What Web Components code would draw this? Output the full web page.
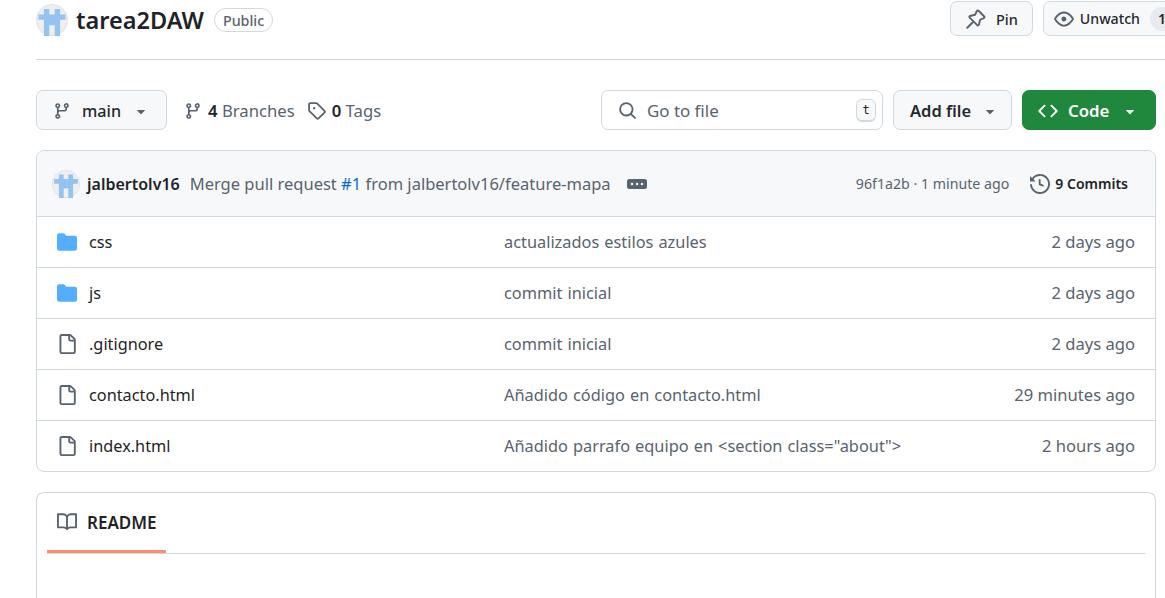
<!DOCTYPE html>
<html lang="en">
<head>
<meta charset="utf-8">
<title>tarea2DAW</title>
<style>
    html, body { margin: 0; height: 598px; overflow: hidden; background: #fff; }
    body { font-family: "Noto Sans", "Open Sans", Arial, sans-serif; color: #1f2328; }
</style>
</head>
<body>
<repo-page>
    <repo-header></repo-header>
    <repo-toolbar></repo-toolbar>
    <file-box>
        <commit-bar slot="head"></commit-bar>
        <file-row kind="dir" name="css" message="actualizados estilos azules" age="2 days ago"></file-row>
        <file-row kind="dir" name="js" message="commit inicial" age="2 days ago"></file-row>
        <file-row name=".gitignore" message="commit inicial" age="2 days ago"></file-row>
        <file-row name="contacto.html" message="Añadido código en contacto.html" age="29 minutes ago"></file-row>
        <file-row name="index.html" message="Añadido parrafo equipo en &lt;section class=&quot;about&quot;&gt;" age="2 hours ago"></file-row>
    </file-box>
    <readme-box></readme-box>
</repo-page>

<script>
(function () {
    const iconPaths = {
        branch: 'M9.5 3.25a2.25 2.25 0 1 1 3 2.122V6A2.5 2.5 0 0 1 10 8.5H6a1 1 0 0 0-1 1v1.128a2.251 2.251 0 1 1-1.5 0V5.372a2.25 2.25 0 1 1 1.5 0v1.836A2.493 2.493 0 0 1 6 7h4a1 1 0 0 0 1-1v-.628A2.25 2.25 0 0 1 9.5 3.25Zm-6 0a.75.75 0 1 0 1.5 0 .75.75 0 0 0-1.5 0Zm8.25-.75a.75.75 0 1 0 0 1.5.75.75 0 0 0 0-1.5ZM4.25 12a.75.75 0 1 0 0 1.5.75.75 0 0 0 0-1.5Z',
        tag: 'M1 7.775V2.75C1 1.784 1.784 1 2.75 1h5.025c.464 0 .91.184 1.238.513l6.25 6.25a1.75 1.75 0 0 1 0 2.474l-5.026 5.026a1.75 1.75 0 0 1-2.474 0l-6.25-6.25A1.752 1.752 0 0 1 1 7.775Zm1.5 0c0 .066.026.13.073.177l6.25 6.25a.25.25 0 0 0 .354 0l5.025-5.025a.25.25 0 0 0 0-.354l-6.25-6.25a.25.25 0 0 0-.177-.073H2.75a.25.25 0 0 0-.25.25ZM6 5a1 1 0 1 1 0 2 1 1 0 0 1 0-2Z',
        search: 'M10.68 11.74a6 6 0 0 1-7.922-8.982 6 6 0 0 1 8.982 7.922l3.04 3.04a.749.749 0 0 1-.326 1.275.749.749 0 0 1-.734-.215ZM11.5 7a4.499 4.499 0 1 0-8.997 0A4.499 4.499 0 0 0 11.5 7Z',
        code: 'm11.28 3.22 4.25 4.25a.75.75 0 0 1 0 1.06l-4.25 4.25a.749.749 0 0 1-1.275-.326.749.749 0 0 1 .215-.734L13.94 8l-3.72-3.72a.749.749 0 0 1 .326-1.275.749.749 0 0 1 .734.215Zm-6.56 0a.751.751 0 0 1 1.042.018.751.751 0 0 1 .018 1.042L2.06 8l3.72 3.72a.749.749 0 0 1-.326 1.275.749.749 0 0 1-.734-.215L.47 8.53a.75.75 0 0 1 0-1.06Z',
        eye: 'M8 2c1.981 0 3.671.992 4.933 2.078 1.27 1.091 2.187 2.345 2.637 3.023a1.62 1.62 0 0 1 0 1.798c-.45.678-1.367 1.932-2.637 3.023C11.67 13.008 9.981 14 8 14c-1.981 0-3.671-.992-4.933-2.078C1.797 10.83.88 9.576.43 8.898a1.62 1.62 0 0 1 0-1.798c.45-.677 1.367-1.931 2.637-3.022C4.33 2.992 6.019 2 8 2ZM1.679 7.932a.12.12 0 0 0 0 .136c.411.622 1.241 1.75 2.366 2.717C5.176 11.758 6.527 12.5 8 12.5c1.473 0 2.825-.742 3.955-1.715 1.124-.967 1.954-2.096 2.366-2.717a.12.12 0 0 0 0-.136c-.412-.621-1.242-1.75-2.366-2.717C10.824 4.242 9.473 3.5 8 3.5c-1.473 0-2.825.742-3.955 1.715-1.124.967-1.954 2.096-2.366 2.717ZM8 10a2 2 0 1 1-.001-3.999A2 2 0 0 1 8 10Z',
        history: 'm.427 1.927 1.215 1.215a8.002 8.002 0 1 1-1.6 5.685.75.75 0 1 1 1.493-.154 6.5 6.5 0 1 0 1.18-4.458l1.358 1.358A.25.25 0 0 1 3.896 6H.25A.25.25 0 0 1 0 5.75V2.104a.25.25 0 0 1 .427-.177ZM7.75 4a.75.75 0 0 1 .75.75v2.992l2.028.812a.75.75 0 0 1-.557 1.392l-2.5-1A.751.751 0 0 1 7 8.25v-3.5A.75.75 0 0 1 7.75 4Z',
        file: 'M2 1.75C2 .784 2.784 0 3.75 0h6.586c.464 0 .909.184 1.237.513l2.914 2.914c.329.328.513.773.513 1.237v9.586A1.75 1.75 0 0 1 13.25 16h-9.5A1.75 1.75 0 0 1 2 14.25Zm1.75-.25a.25.25 0 0 0-.25.25v12.5c0 .138.112.25.25.25h9.5a.25.25 0 0 0 .25-.25V6h-2.75A1.75 1.75 0 0 1 9 4.25V1.5Zm6.75.062V4.25c0 .138.112.25.25.25h2.688l-.011-.013-2.914-2.914-.013-.011Z',
        dir: 'M1.75 1A1.75 1.75 0 0 0 0 2.75v10.5C0 14.216.784 15 1.75 15h12.5A1.75 1.75 0 0 0 16 13.25v-8.5A1.75 1.75 0 0 0 14.25 3H7.5a.25.25 0 0 1-.2-.1l-.9-1.2C6.07 1.26 5.55 1 5 1H1.75Z',
        book: 'M0 1.75A.75.75 0 0 1 .75 1h4.253c1.227 0 2.317.59 3 1.501A3.743 3.743 0 0 1 11.006 1h4.245a.75.75 0 0 1 .75.75v10.5a.75.75 0 0 1-.75.75h-4.507a2.25 2.25 0 0 0-1.591.659l-.622.621a.75.75 0 0 1-1.06 0l-.622-.621A2.25 2.25 0 0 0 5.258 13H.75a.75.75 0 0 1-.75-.75Zm7.251 10.324.004-5.073-.002-2.253A2.25 2.25 0 0 0 5.003 2.5H1.5v9h3.757a3.75 3.75 0 0 1 1.994.574ZM8.755 4.75l-.004 7.322a3.752 3.752 0 0 1 1.992-.572H14.5v-9h-3.495a2.25 2.25 0 0 0-2.25 2.25Z',
        caret: 'm4.427 7.427 3.396 3.396a.25.25 0 0 0 .354 0l3.396-3.396A.25.25 0 0 0 11.396 7H4.604a.25.25 0 0 0-.177.427Z',
        ellipsis: 'M0 5.75C0 4.784.784 4 1.75 4h12.5c.966 0 1.75.784 1.75 1.75v4.5A1.75 1.75 0 0 1 14.25 12H1.75A1.75 1.75 0 0 1 0 10.25ZM12 7a1 1 0 1 0 0 2 1 1 0 0 0 0-2ZM7 8a1 1 0 1 0 2 0 1 1 0 0 0-2 0ZM4 7a1 1 0 1 0 0 2 1 1 0 0 0 0-2Z'
    };

    class OctIcon extends HTMLElement {
        connectedCallback() {
            const size = this.getAttribute('size') || '18';
            const name = this.getAttribute('name');
            const root = this.shadowRoot || this.attachShadow({ mode: 'open' });
            // pin is a stroked shape, the others are octicon fills
            const inner = name === 'pin'
                ? '<path fill="none" stroke="currentColor" stroke-width="1.5" stroke-linejoin="round" stroke-linecap="round" d="M10 1.4l4.6 4.6a.8.8 0 0 1-.3 1.3l-3 1.3-1 4a.8.8 0 0 1-1.3.35L2.9 6.9a.8.8 0 0 1 .35-1.3l4-1 1.4-2.9A.8.8 0 0 1 10 1.4ZM5.8 10.2l-4.8 4.8"/>'
                : `<path fill="currentColor" d="${iconPaths[name]}"/>`;
            root.innerHTML = `
                <style>
                    :host { display: inline-flex; flex: none; }
                    svg { display: block; }
                </style>
                <svg width="${size}" height="${size}" viewBox="0 0 16 16">${inner}</svg>`;
        }
    }
    customElements.define('oct-icon', OctIcon);

    class IdentIcon extends HTMLElement {
        connectedCallback() {
            const size = this.getAttribute('size') || '32';
            const root = this.shadowRoot || this.attachShadow({ mode: 'open' });
            root.innerHTML = `
                <style>
                    :host { display: inline-flex; flex: none; }
                    svg { display: block; }
                </style>
                <svg width="${size}" height="${size}" viewBox="0 0 32 32">
                    <circle cx="16" cy="16" r="15.5" fill="#efefef" stroke="#dcdfe3"/>
                    <path fill="#93c3ee" transform="translate(2.5 5)" d="M5.4 0h5.4v5.4h5.4V0h5.4v5.4H27v5.4h-5.4v16.2h-5.4V16.2h-5.4V27H5.4V10.8H0V5.4h5.4Z"/>
                </svg>`;
        }
    }
    customElements.define('ident-icon', IdentIcon);

    class RepoButton extends HTMLElement {
        connectedCallback() {
            const root = this.shadowRoot || this.attachShadow({ mode: 'open' });
            root.innerHTML = `
                <style>
                    :host {
                        display: inline-flex;
                        align-items: center;
                        box-sizing: border-box;
                        height: var(--btn-height, 40px);
                        padding: var(--btn-padding, 1px 16px 0);
                        gap: var(--btn-gap, 10px);
                        border: 1px solid #d1d9e0;
                        border-radius: 7px;
                        background: #f6f8fa;
                        color: #25292e;
                        font-size: var(--btn-font, 16.5px);
                        font-weight: var(--btn-weight, 600);
                        white-space: nowrap;
                    }
                    :host([primary]) {
                        background: #1f883d;
                        border-color: #1f883d;
                        color: #fff;
                        font-weight: 600;
                    }
                </style>
                <slot></slot>`;
        }
    }
    customElements.define('repo-button', RepoButton);

    class RepoHeader extends HTMLElement {
        connectedCallback() {
            const root = this.shadowRoot || this.attachShadow({ mode: 'open' });
            root.innerHTML = `
                <style>
                    :host {
                        display: flex;
                        justify-content: space-between;
                        box-sizing: border-box;
                        height: 60px;
                        margin-right: -18px;
                        border-bottom: 1px solid #d1d9e0;
                        padding-top: 1px;
                    }
                    .left { display: flex; align-items: center; height: 40px; margin-top: -1px; }
                    .name { margin-left: 8px; font-size: 23.5px; font-weight: 600; color: #1f2328; line-height: 40px; }
                    .label {
                        margin-left: 10px;
                        height: 24px;
                        line-height: 23px;
                        box-sizing: border-box;
                        padding: 0 8px;
                        border: 1px solid #d1d9e0;
                        border-radius: 12px;
                        font-size: 14.3px;
                        font-weight: 500;
                        color: #59636e;
                    }
                    .right { display: flex; gap: 10px; align-items: flex-start; --btn-height: 35px; --btn-font: 14.2px; --btn-weight: 500; }
                    .pin { --btn-padding: 0 14px 0 15px; --btn-gap: 10px; --btn-font: 14.5px; }
                    .watch { --btn-padding: 0 8px 0 10px; --btn-gap: 6px; }
                    .count {
                        display: inline-block;
                        width: 24px;
                        height: 24px;
                        line-height: 24px;
                        margin-left: 4px;
                        border-radius: 12px;
                        background: #e7ebef;
                        text-align: center;
                        font-size: 14px;
                        font-weight: 600;
                    }
                    oct-icon { color: #59636e; }
                </style>
                <div class="left">
                    <ident-icon size="32"></ident-icon>
                    <span class="name">tarea2DAW</span>
                    <span class="label">Public</span>
                </div>
                <div class="right">
                    <repo-button class="pin"><oct-icon name="pin" size="20"></oct-icon>Pin</repo-button>
                    <repo-button class="watch"><oct-icon name="eye" size="20"></oct-icon>Unwatch<span class="count">1</span></repo-button>
                </div>`;
        }
    }
    customElements.define('repo-header', RepoHeader);

    class RepoToolbar extends HTMLElement {
        connectedCallback() {
            const root = this.shadowRoot || this.attachShadow({ mode: 'open' });
            root.innerHTML = `
                <style>
                    :host {
                        display: flex;
                        align-items: center;
                        margin-top: 30px;
                        width: 1120px;
                        height: 40px;
                    }
                    .branch { --btn-padding: 1px 16px 0; --btn-gap: 11px; --btn-font: 16.2px; width: 131px; --btn-weight: 500; }
                    .stat { display: flex; align-items: center; gap: 6px; padding-top: 1px; font-size: 16.7px; color: #59636e; white-space: nowrap; }
                    .stat b { font-weight: 600; color: #1f2328; }
                    .stat oct-icon { color: #59636e; }
                    .branches { margin-left: 17px; }
                    .tags { margin-left: 12px; }
                    .search {
                        display: flex;
                        align-items: center;
                        box-sizing: border-box;
                        width: 282px;
                        height: 40px;
                        margin-left: auto;
                        padding: 1px 6px 0 16px;
                        border: 1px solid #d1d9e0;
                        border-radius: 7px;
                        background: #fff;
                        font-size: 16.9px;
                        color: #59636e;
                    }
                    .search span { margin-left: 10px; flex: 1; }
                    .search oct-icon { color: #59636e; }
                    kbd {
                        box-sizing: border-box;
                        width: 20px;
                        height: 23px;
                        border: 1px solid #d1d9e0;
                        border-bottom-width: 2px;
                        border-radius: 6px;
                        background: #f6f8fa;
                        text-align: center;
                        font: 12px/20px "DejaVu Sans Mono", "Liberation Mono", monospace;
                        color: #1f2328;
                    }
                    .add { margin-left: 10px; width: 119px; --btn-gap: 10px; }
                    .code { margin-left: 10px; width: 134px; --btn-padding: 1px 15px 0; --btn-gap: 10px; --btn-font: 16.8px; }
                    repo-button oct-icon { color: #59636e; }
                    .code oct-icon { color: #fff; }
                    .code .end { margin-left: 2px; }
                </style>
                <repo-button class="branch"><oct-icon name="branch" size="18"></oct-icon>main<oct-icon name="caret" size="18"></oct-icon></repo-button>
                <div class="stat branches"><oct-icon name="branch" size="18"></oct-icon><span><b>4</b> Branches</span></div>
                <div class="stat tags"><oct-icon name="tag" size="19"></oct-icon><span><b>0</b> Tags</span></div>
                <div class="search"><oct-icon name="search" size="19"></oct-icon><span>Go to file</span><kbd>t</kbd></div>
                <repo-button class="add">Add file<oct-icon name="caret" size="18"></oct-icon></repo-button>
                <repo-button class="code" primary><oct-icon name="code" size="20"></oct-icon>Code<oct-icon class="end" name="caret" size="18"></oct-icon></repo-button>`;
        }
    }
    customElements.define('repo-toolbar', RepoToolbar);

    class CommitBar extends HTMLElement {
        connectedCallback() {
            const root = this.shadowRoot || this.attachShadow({ mode: 'open' });
            root.innerHTML = `
                <style>
                    :host {
                        display: flex;
                        align-items: center;
                        box-sizing: border-box;
                        height: 66px;
                        padding: 0 27px 0 15px;
                        background: #f6f8fa;
                        border-bottom: 1px solid #d1d9e0;
                        border-radius: 7px 7px 0 0;
                        font-size: 16px;
                        white-space: nowrap;
                    }
                    .author { margin-left: 7px; font-weight: 600; color: #1f2328; }
                    .msg { margin-left: 10px; font-size: 16.5px; color: #59636e; }
                    .msg a { color: #0969da; text-decoration: none; }
                    .more { margin-left: 16px; color: #59636e; }
                    .sha { margin-left: auto; font-size: 14.2px; color: #59636e; }
                    .commits { display: flex; align-items: center; gap: 5px; margin-left: 21px; font-size: 14px; font-weight: 600; color: #1f2328; }
                    .commits oct-icon { color: #59636e; }
                </style>
                <ident-icon size="28"></ident-icon>
                <span class="author">jalbertolv16</span>
                <span class="msg">Merge pull request <a>#1</a> from jalbertolv16/feature-mapa</span>
                <oct-icon class="more" name="ellipsis" size="20"></oct-icon>
                <span class="sha">96f1a2b · 1 minute ago</span>
                <span class="commits"><oct-icon name="history" size="20"></oct-icon>9 Commits</span>`;
        }
    }
    customElements.define('commit-bar', CommitBar);

    class FileRow extends HTMLElement {
        connectedCallback() {
            const kind = this.getAttribute('kind') === 'dir' ? 'dir' : 'file';
            const root = this.shadowRoot || this.attachShadow({ mode: 'open' });
            root.innerHTML = `
                <style>
                    :host {
                        display: grid;
                        grid-template-columns: 447px 1fr auto;
                        align-items: center;
                        box-sizing: border-box;
                        height: 51px;
                        padding: 0 20px;
                        border-top: 1px solid #d1d9e0;
                        font-size: 16.35px;
                        white-space: nowrap;
                    }
                    :host(:first-of-type) { border-top: 0; height: 50px; }
                    .name { display: flex; align-items: center; gap: 12px; font-size: 16.3px; color: #1f2328; }
                    .name oct-icon { color: #59636e; }
                    .dir oct-icon { color: #54aeff; }
                    .msg, .age { color: #59636e; }
                    .msg { margin-bottom: 1px; word-spacing: .8px; }
                    .age { margin-bottom: 2px; font-size: 16.6px; }
                </style>
                <div class="name ${kind}"><oct-icon name="${kind}" size="20"></oct-icon><span></span></div>
                <div class="msg"></div>
                <div class="age"></div>`;
            root.querySelector('.name span').textContent = this.getAttribute('name');
            root.querySelector('.msg').textContent = this.getAttribute('message');
            root.querySelector('.age').textContent = this.getAttribute('age');
        }
    }
    customElements.define('file-row', FileRow);

    class FileBox extends HTMLElement {
        connectedCallback() {
            const root = this.shadowRoot || this.attachShadow({ mode: 'open' });
            root.innerHTML = `
                <style>
                    :host {
                        display: block;
                        box-sizing: border-box;
                        width: 1120px;
                        margin-top: 20px;
                        border: 1px solid #d1d9e0;
                        border-radius: 8px;
                    }
                </style>
                <slot name="head"></slot>
                <slot></slot>`;
        }
    }
    customElements.define('file-box', FileBox);

    class ReadmeBox extends HTMLElement {
        connectedCallback() {
            const root = this.shadowRoot || this.attachShadow({ mode: 'open' });
            root.innerHTML = `
                <style>
                    :host {
                        display: block;
                        box-sizing: border-box;
                        width: 1120px;
                        height: 106px;
                        margin-top: 20px;
                        padding: 0 10px;
                        border: 1px solid #d1d9e0;
                        border-bottom: 0;
                        border-radius: 8px 8px 0 0;
                    }
                    .tabs { height: 61px; border-bottom: 1px solid #d1d9e0; box-sizing: border-box; display: flex; }
                    .tab {
                        display: flex;
                        align-items: center;
                        gap: 10px;
                        box-sizing: border-box;
                        width: 119px;
                        height: 60px;
                        padding: 1px 0 0 10px;
                        border-bottom: 3px solid #fd8c73;
                        font-size: 17px;
                        font-weight: 600;
                        color: #1f2328;
                    }
                    .tab oct-icon { color: #59636e; }
                </style>
                <div class="tabs">
                    <div class="tab"><oct-icon name="book" size="20"></oct-icon>README</div>
                </div>`;
        }
    }
    customElements.define('readme-box', ReadmeBox);

    class RepoPage extends HTMLElement {
        constructor() {
            super();
            this.attachShadow({ mode: 'open' });
            this.shadowRoot.innerHTML = `
                <style>
                    :host { display: block; padding-left: 36px; }
                </style>
                <slot></slot>`;
        }
    }
    customElements.define('repo-page', RepoPage);
}());
</script>
</body>
</html>
